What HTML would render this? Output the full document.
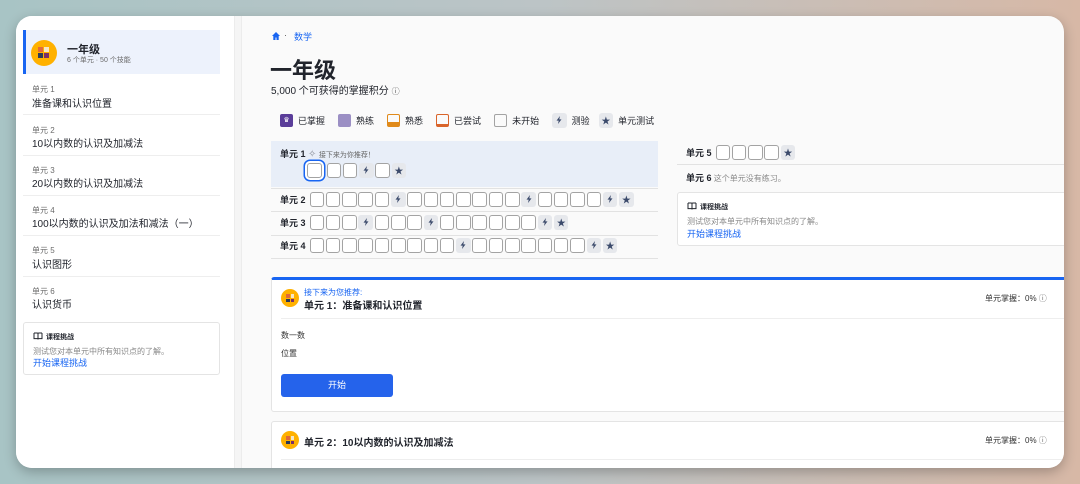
<!DOCTYPE html>
<html><head><meta charset="utf-8">
<style>
*{box-sizing:border-box;margin:0;padding:0}
body{width:1080px;height:484px;overflow:hidden;position:relative;font-family:"Liberation Sans","Noto Sans CJK SC",sans-serif;background:linear-gradient(90deg,#a8c4c5 0%,#bcc4c6 50%,#d7b8a6 100%);color:#21242c}
.win{position:absolute;left:16px;top:16px;width:1048px;height:452px;border-radius:16px;background:#fafafa;overflow:hidden;box-shadow:0 4px 12px rgba(0,0,0,.25)}
.a{position:absolute;white-space:nowrap}
.side{position:absolute;left:0;top:0;width:218px;height:452px;background:#fff}
.gut{position:absolute;left:218px;top:0;width:8px;height:452px;background:#f5f5f5;border-left:1px solid #ececec;border-right:1px solid #ececec}
.lab{font-size:8px;color:#6b6b6b}
.tt{font-size:10px;color:#21242c}
.sep{position:absolute;height:1px;background:#eeeeee}
.ic{position:absolute;border-radius:50%;background:#ffb100}
.ic i{position:absolute}
.row{position:absolute;display:flex;align-items:center}
.row b{font-size:9px;font-weight:bold;color:#21242c;margin-right:4px}
.bx{width:14.5px;height:14.5px;border:1.5px solid #a3a3a3;border-radius:3px;background:#fff;margin-right:1.8px;flex:none}
.q,.s{width:14.5px;height:14.5px;border-radius:3px;background:#e6e8ec;margin-right:1.8px;flex:none;display:flex;align-items:center;justify-content:center;font-size:9px;color:#3b4a6b}
.card{position:absolute;background:#fff;border:1px solid #e4e4e4;border-radius:3px}
</style></head><body>
<svg width="0" height="0" style="position:absolute"><defs><symbol id="z" viewBox="0 0 10 10"><path d="M6 1L2.5 5.6h2.2L4 9l3.5-4.6H5.3z" fill="#3b4a6b"/></symbol></defs></svg>
<div class="win">
 <div class="side">
  <div class="a" style="left:7px;top:14px;width:197px;height:44px;background:#edf2fc;border-left:3px solid #1865f2"></div>
  <div class="ic" style="left:15px;top:24px;width:26px;height:26px"><i style="left:7px;top:7px;width:5px;height:5px;background:#e0693b"></i><i style="left:13px;top:7px;width:5px;height:5px;background:#f5e6c8"></i><i style="left:7px;top:13px;width:5px;height:5px;background:#2b3a5a"></i><i style="left:13px;top:13px;width:5px;height:5px;background:#7a2e6a"></i></div>
  <div class="a" style="left:51px;top:25px;font-size:11px;font-weight:bold">一年级</div>
  <div class="a" style="left:51px;top:39px;font-size:7px;color:#6b6b6b">6 个单元 · 50 个技能</div>
  <div class="a lab" style="left:16px;top:68px">单元 1</div><div class="a tt" style="left:16px;top:79px">准备课和认识位置</div>
  <div class="sep" style="left:7px;top:98px;width:197px"></div>
  <div class="a lab" style="left:16px;top:109px">单元 2</div><div class="a tt" style="left:16px;top:119px">10以内数的认识及加减法</div>
  <div class="sep" style="left:7px;top:139px;width:197px"></div>
  <div class="a lab" style="left:16px;top:149px">单元 3</div><div class="a tt" style="left:16px;top:159px">20以内数的认识及加减法</div>
  <div class="sep" style="left:7px;top:179px;width:197px"></div>
  <div class="a lab" style="left:16px;top:189px">单元 4</div><div class="a tt" style="left:16px;top:199px">100以内数的认识及加法和减法（一）</div>
  <div class="sep" style="left:7px;top:219px;width:197px"></div>
  <div class="a lab" style="left:16px;top:229px">单元 5</div><div class="a tt" style="left:16px;top:240px">认识图形</div>
  <div class="sep" style="left:7px;top:260px;width:197px"></div>
  <div class="a lab" style="left:16px;top:270px">单元 6</div><div class="a tt" style="left:16px;top:280px">认识货币</div>
  <div class="card" style="left:7px;top:306px;width:197px;height:53px">
   <svg class="a" style="left:9px;top:9px" width="10" height="8" viewBox="0 0 10 8"><path d="M1 1h3.2c.5 0 .8.3.8.8V7.5M9 1H5.8c-.5 0-.8.3-.8.8M1 1v5.6h4M9 1v5.6H5" fill="none" stroke="#21242c" stroke-width="1"/></svg>
   <div class="a" style="left:22px;top:9px;font-size:7px;font-weight:bold">课程挑战</div>
   <div class="a" style="left:9px;top:23px;font-size:8px;color:#888">测试您对本单元中所有知识点的了解。</div>
   <div class="a" style="left:9px;top:33px;font-size:9px;color:#1865f2">开始课程挑战</div>
  </div>
 </div>
 <div class="gut"></div>

 <svg class="a" style="left:255px;top:15px" width="10" height="10" viewBox="0 0 10 10"><path d="M5 1L1 5h1.3v4h2.2V6.5h1V9h2.2V5H9z" fill="#1865f2"/></svg>
 <div class="a" style="left:268px;top:14px;font-size:9px;color:#555">·</div>
 <div class="a" style="left:278px;top:14px;font-size:9px;color:#1865f2">数学</div>
 <div class="a" style="left:254px;top:37px;font-size:22px;font-weight:bold">一年级</div>
 <div class="a" style="left:255px;top:66px;font-size:10px">5,000 个可获得的掌握积分 <span style="font-size:8px;color:#555">ⓘ</span></div>

 <div class="row" style="left:264px;top:97px;font-size:9px;color:#21242c">
  <span style="width:13px;height:13px;background:#5a3d99;border-radius:2px;margin-right:5px;color:#fff;font-size:7px;text-align:center;line-height:13px">♛</span>已掌握
  <span style="width:13px;height:13px;background:#9b8fc4;border-radius:2px;margin:0 5px 0 13px"></span>熟练
  <span style="width:13px;height:13px;border:1.5px solid #e08a1a;border-bottom:5px solid #e08a1a;border-radius:2px;margin:0 5px 0 13px"></span>熟悉
  <span style="width:13px;height:13px;border:1.5px solid #d9642a;border-bottom:3px solid #d9642a;border-radius:2px;margin:0 5px 0 13px"></span>已尝试
  <span style="width:13px;height:13px;border:1.5px solid #a3a3a3;border-radius:2px;margin:0 5px 0 13px"></span>未开始
  <span class="q" style="margin:0 5px 0 13px"><svg width="10" height="10"><use href="#z"/></svg></span>测验
  <span class="s" style="margin:0 5px 0 9px">★</span>单元测试
 </div>

 <div class="a" style="left:255px;top:125px;width:387px;height:46px;background:#e8eef8"></div>
 <div class="a" style="left:264px;top:131px;font-size:9px;font-weight:bold">单元 1 <span style="font-weight:normal;font-size:10px;color:#8a8f9a">✧</span> <span style="font-weight:normal;font-size:7px;color:#666">接下来为你推荐！</span></div>
 <div class="row" style="left:291px;top:147px"><span class="bx" style="box-shadow:0 0 0 2px #fff,0 0 0 3.5px #1865f2;margin-right:5px"></span><span class="bx"></span><span class="bx"></span><span class="q"><svg width="10" height="10"><use href="#z"/></svg></span><span class="bx"></span><span class="s">★</span></div>
 <div class="sep" style="left:255px;top:172px;width:387px;background:#e2e2e2"></div>
 <div class="row" style="left:264px;top:176px"><b>单元 2</b><span class="bx"></span><span class="bx"></span><span class="bx"></span><span class="bx"></span><span class="bx"></span><span class="q"><svg width="10" height="10"><use href="#z"/></svg></span><span class="bx"></span><span class="bx"></span><span class="bx"></span><span class="bx"></span><span class="bx"></span><span class="bx"></span><span class="bx"></span><span class="q"><svg width="10" height="10"><use href="#z"/></svg></span><span class="bx"></span><span class="bx"></span><span class="bx"></span><span class="bx"></span><span class="q"><svg width="10" height="10"><use href="#z"/></svg></span><span class="s">★</span></div>
 <div class="sep" style="left:255px;top:195px;width:387px;background:#e2e2e2"></div>
 <div class="row" style="left:264px;top:199px"><b>单元 3</b><span class="bx"></span><span class="bx"></span><span class="bx"></span><span class="q"><svg width="10" height="10"><use href="#z"/></svg></span><span class="bx"></span><span class="bx"></span><span class="bx"></span><span class="q"><svg width="10" height="10"><use href="#z"/></svg></span><span class="bx"></span><span class="bx"></span><span class="bx"></span><span class="bx"></span><span class="bx"></span><span class="bx"></span><span class="q"><svg width="10" height="10"><use href="#z"/></svg></span><span class="s">★</span></div>
 <div class="sep" style="left:255px;top:219px;width:387px;background:#e2e2e2"></div>
 <div class="row" style="left:264px;top:222px"><b>单元 4</b><span class="bx"></span><span class="bx"></span><span class="bx"></span><span class="bx"></span><span class="bx"></span><span class="bx"></span><span class="bx"></span><span class="bx"></span><span class="bx"></span><span class="q"><svg width="10" height="10"><use href="#z"/></svg></span><span class="bx"></span><span class="bx"></span><span class="bx"></span><span class="bx"></span><span class="bx"></span><span class="bx"></span><span class="bx"></span><span class="q"><svg width="10" height="10"><use href="#z"/></svg></span><span class="s">★</span></div>
 <div class="sep" style="left:255px;top:242px;width:387px;background:#e2e2e2"></div>

 <div class="row" style="left:670px;top:129px"><b>单元 5</b><span class="bx"></span><span class="bx"></span><span class="bx"></span><span class="bx"></span><span class="s">★</span></div>
 <div class="sep" style="left:661px;top:148px;width:387px;background:#e2e2e2"></div>
 <div class="a" style="left:670px;top:155px;font-size:8px;color:#888"><b style="color:#21242c;font-size:9px">单元 6</b> 这个单元没有练习。</div>
 <div class="card" style="left:661px;top:176px;width:392px;height:54px">
  <svg class="a" style="left:9px;top:9px" width="10" height="8" viewBox="0 0 10 8"><path d="M1 1h3.2c.5 0 .8.3.8.8V7.5M9 1H5.8c-.5 0-.8.3-.8.8M1 1v5.6h4M9 1v5.6H5" fill="none" stroke="#21242c" stroke-width="1"/></svg>
  <div class="a" style="left:22px;top:9px;font-size:7px;font-weight:bold">课程挑战</div>
  <div class="a" style="left:9px;top:23px;font-size:8px;color:#888">测试您对本单元中所有知识点的了解。</div>
  <div class="a" style="left:9px;top:34px;font-size:9px;color:#1865f2">开始课程挑战</div>
 </div>

 <div class="card" style="left:255px;top:261px;width:800px;height:135px;border-top:3px solid #1865f2">
  <div class="ic" style="left:9px;top:9px;width:18px;height:18px"><i style="left:5px;top:5px;width:3.5px;height:3.5px;background:#e0693b"></i><i style="left:9.5px;top:5px;width:3.5px;height:3.5px;background:#f5e6c8"></i><i style="left:5px;top:9.5px;width:3.5px;height:3.5px;background:#2b3a5a"></i><i style="left:9.5px;top:9.5px;width:3.5px;height:3.5px;background:#7a2e6a"></i></div>
  <div class="a" style="left:32px;top:7px;font-size:8px;color:#1865f2">接下来为您推荐:</div>
  <div class="a" style="left:32px;top:17px;font-size:10px;font-weight:bold">单元 1：准备课和认识位置</div>
  <div class="a" style="left:713px;top:13px;font-size:8px;color:#333">单元掌握：0% <span style="color:#666">ⓘ</span></div>
  <div class="sep" style="left:9px;top:38px;width:790px"></div>
  <div class="a" style="left:9px;top:50px;font-size:8px;color:#333">数一数</div>
  <div class="a" style="left:9px;top:68px;font-size:8px;color:#333">位置</div>
  <div class="a" style="left:9px;top:94px;width:112px;height:23px;background:#2563eb;border-radius:3px;color:#fff;font-size:9px;text-align:center;line-height:23px">开始</div>
 </div>
 <div class="card" style="left:255px;top:405px;width:800px;height:60px">
  <div class="ic" style="left:9px;top:9px;width:18px;height:18px"><i style="left:5px;top:5px;width:3.5px;height:3.5px;background:#e0693b"></i><i style="left:9.5px;top:5px;width:3.5px;height:3.5px;background:#f5e6c8"></i><i style="left:5px;top:9.5px;width:3.5px;height:3.5px;background:#2b3a5a"></i><i style="left:9.5px;top:9.5px;width:3.5px;height:3.5px;background:#7a2e6a"></i></div>
  <div class="a" style="left:32px;top:12px;font-size:10px;font-weight:bold">单元 2：10以内数的认识及加减法</div>
  <div class="a" style="left:713px;top:13px;font-size:8px;color:#333">单元掌握：0% <span style="color:#666">ⓘ</span></div>
  <div class="sep" style="left:9px;top:37px;width:790px"></div>
 </div>
</div>
</body></html>
